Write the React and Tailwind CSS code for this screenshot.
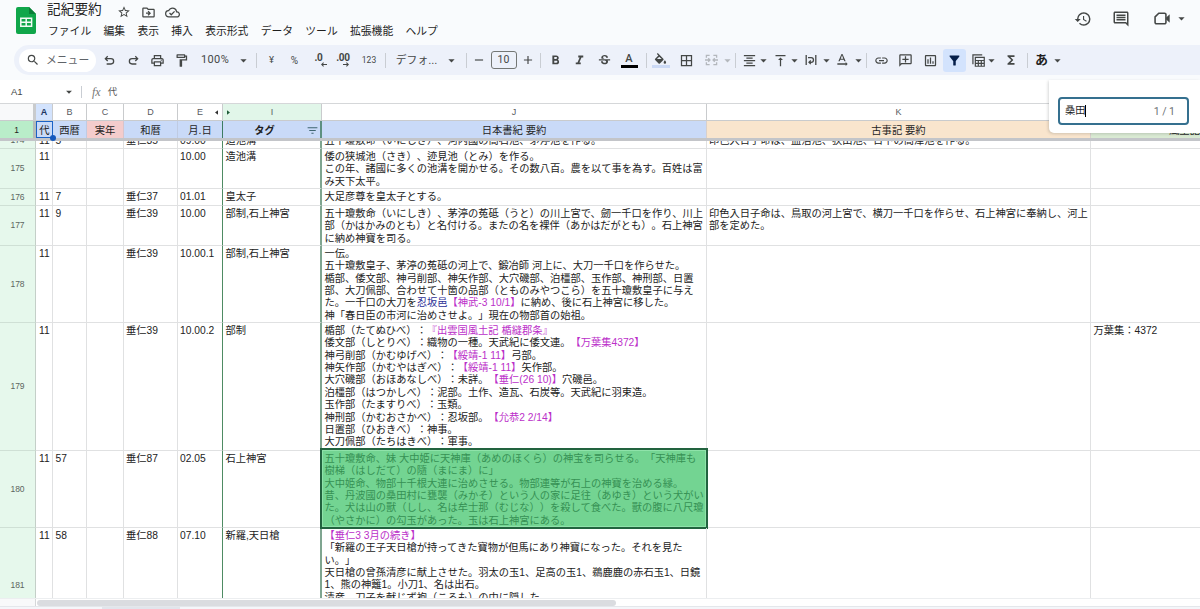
import React from 'react';
import {
    MdStarBorder, MdOutlineDriveFileMove, MdOutlineCloudDone, MdSearch, MdOutlinePrint, MdOutlineFormatPaint,
    MdArrowDropDown, MdFormatBold, MdFormatItalic, MdStrikethroughS, MdBorderAll, MdFormatAlignCenter,
    MdVerticalAlignTop, MdTextRotationNone, MdLink, MdOutlineAddComment, MdOutlineInsertChart, MdFilterAlt,
    MdFunctions, MdHistory, MdOutlineComment, MdFilterList, MdAdd, MdRemove,
} from 'react-icons/md';

const menus = ['ファイル', '編集', '表示', '挿入', '表示形式', 'データ', 'ツール', '拡張機能', 'ヘルプ'];

// a line is a string, or a list of strings where ['m', text] is magenta and ['b', text] is blue
const rows = [
    {
        no: '175', h: 'h-[40px]', a: '11', b: '', d: '', e: '10.00', tag: '造池溝',
        j: [
            '倭の狭城池（さき）、迹見池（とみ）を作る。',
            'この年、諸國に多くの池溝を開かせる。その数八百。農を以て事を為す。百姓は富',
            'み天下太平。',
        ],
    },
    { no: '176', h: 'h-[17px]', a: '11', b: '7', d: '垂仁37', e: '01.01', tag: '皇太子', j: ['大足彦尊を皇太子とする。'] },
    {
        no: '177', h: 'h-[40px]', a: '11', b: '9', d: '垂仁39', e: '10.00', tag: '部制,石上神宮',
        j: [
            '五十瓊敷命（いにしき）、茅渟の菟砥（うと）の川上宮で、劒一千口を作り、川上',
            '部（かはかみのとも）と名付ける。またの名を裸伴（あかはだがとも）。石上神宮',
            'に納め神寶を司る。',
        ],
        k: ['印色入日子命は、鳥取の河上宮で、横刀一千口を作らせ、石上神宮に奉納し、河上', '部を定めた。'],
    },
    {
        no: '178', h: 'h-[77px]', a: '11', b: '', d: '垂仁39', e: '10.00.1', tag: '部制,石上神宮',
        j: [
            '一伝。',
            '五十瓊敷皇子、茅渟の菟砥の河上で、鍛冶師 河上に、大刀一千口を作らせた。',
            '楯部、倭文部、神弓削部、神矢作部、大穴磯部、泊橿部、玉作部、神刑部、日置',
            '部、大刀佩部、合わせて十箇の品部（とものみやつこら）を五十瓊敷皇子に与え',
            ['た。一千口の大刀を', ['b', '忍坂邑'], ['m', '【神武-3 10/1】'], 'に納め、後に石上神宮に移した。'],
            '神「春日臣の市河に治めさせよ。」現在の物部首の始祖。',
        ],
    },
    {
        no: '179', h: 'h-[128px]', a: '11', b: '', d: '垂仁39', e: '10.00.2', tag: '部制', l: ['万葉集：4372'],
        j: [
            ['楯部（たてぬひべ）：', ['m', '『出雲国風土記 楯縫郡条』']],
            ['倭文部（しとりべ）：織物の一種。天武紀に倭文連。', ['m', '【万葉集4372】']],
            ['神弓削部（かむゆげべ）：', ['m', '【綏靖-1 11】'], '弓部。'],
            ['神矢作部（かむやはぎべ）：', ['m', '【綏靖-1 11】'], '矢作部。'],
            ['大穴磯部（おほあなしべ）：未詳。', ['m', '【垂仁(26 10)】'], '穴磯邑。'],
            '泊橿部（はつかしべ）：泥部。土作、造瓦、石炭等。天武紀に羽束造。',
            '玉作部（たますりべ）：玉類。',
            ['神刑部（かむおさかべ）：忍坂部。', ['m', '【允恭2 2/14】']],
            '日置部（ひおきべ）：神事。',
            '大刀佩部（たちはきべ）：軍事。',
        ],
    },
    {
        no: '180', h: 'h-[77px]', a: '11', b: '57', d: '垂仁87', e: '02.05', tag: '石上神宮', match: true,
        j: [
            '五十瓊敷命、妹 大中姫に天神庫（あめのほくら）の神宝を司らせる。「天神庫も',
            '樹梯（はしだて）の隨（まにま）に」',
            '大中姫命、物部十千根大連に治めさせる。物部連等が石上の神寶を治める縁。',
            '昔、丹波國の桑田村に甕襲（みかそ）という人の家に足往（あゆき）という犬がい',
            'た。犬は山の獸（しし、名は牟士那（むじな））を殺して食べた。獸の腹に八尺瓊',
            '（やさかに）の勾玉があった。玉は石上神宮にある。',
        ],
    },
    {
        no: '181', h: 'h-[115px]', a: '11', b: '58', d: '垂仁88', e: '07.10', tag: '新羅,天日槍',
        j: [
            [['m', '【垂仁3 3月の続き】']],
            '「新羅の王子天日槍が持ってきた寶物が但馬にあり神寶になった。それを見た',
            'い。」',
            '天日槍の曾孫清彦に献上させた。羽太の玉1、足高の玉1、鵜鹿鹿の赤石玉1、日鏡',
            '1、熊の神籬1。小刀1、名は出石。',
            '清彦、刀子を献じず袍（ころも）の中に隠した。',
        ],
    },
];

const partialRow = {
    no: '174', h: 'h-[16px]', a: '11', b: '5', d: '垂仁35', e: '09.00', tag: '造池溝',
    j: ['五十瓊敷命（いにしき）、河内國の高石池、茅渟池を作る。'],
    k: ['印色入日子命は、血沼池、狭山池、日下の高津池を作る。'],
};

const Lines = ({ lines = [] }) => lines.map((line, i) => (
    <div key={i}>
        {Array.isArray(line)
            ? line.map((part, n) => Array.isArray(part)
                ? <span key={n} className={part[0] === 'm' ? 'text-[#bb2fc9]' : 'text-[#2c2f96]'}>{part[1]}</span>
                : <span key={n}>{part}</span>)
            : line}
    </div>
));

const Row = ({ row }) => (
    <div className={`flex shrink-0 ${row.h}`}>
        <div className="w-[36px] shrink-0 bg-[#e6f8ec] border-r border-b border-r-[#c4cfc8] border-b-[#cfe0d5] flex items-center justify-center text-[8.5px] text-[#5c6660]">{row.no}</div>
        <div className="w-[17px] shrink-0 border-r border-b border-[#e0e1e2] pt-[2.1px] pl-[3px]">{row.a}</div>
        <div className="w-[34px] shrink-0 border-r border-b border-[#e0e1e2] pt-[2.1px] pl-[2.5px]">{row.b}</div>
        <div className="w-[37px] shrink-0 border-r border-b border-[#e0e1e2]" />
        <div className="w-[54px] shrink-0 border-r border-b border-[#e0e1e2] pt-[2.1px] pl-[2px]">{row.d}</div>
        <div className="w-[45px] shrink-0 border-r border-b border-r-[#4e8b63] border-b-[#e0e1e2] pt-[2.1px] pl-[2px]">{row.e}</div>
        <div className="w-[99px] shrink-0 border-r-2 border-b border-r-[#7fa590] border-b-[#e0e1e2] pt-[2.1px] pl-[2.5px]">{row.tag}</div>
        <div className="relative w-[385px] shrink-0 border-r border-b border-[#e0e1e2] pt-[2.1px] pl-[2.5px]">
            {row.match && <div className="absolute -left-[2px] -right-[2px] -top-[3px] -bottom-[2px] bg-[#73d492] border-2 border-[#22633f] shadow-[inset_0_0_0_1px_#8fe3aa]" />}
            <div className={row.match ? 'relative text-[#369154]' : ''}><Lines lines={row.j} /></div>
        </div>
        <div className="w-[384px] shrink-0 border-r border-b border-[#e0e1e2] pt-[2.1px] pl-[2px]"><Lines lines={row.k} /></div>
        <div className="flex-1 border-b border-[#e0e1e2] pt-[2.1px] pl-[2.5px]"><Lines lines={row.l} /></div>
    </div>
);

const Slot = ({ className, children }) => (
    <div className={`flex items-center justify-center shrink-0 h-full whitespace-nowrap *:shrink-0 ${className}`}>{children}</div>
);

const Caret = ({ className }) => <Slot className={className}><MdArrowDropDown className="w-[15px] h-[15px]" /></Slot>;
const Sep = ({ className }) => <Slot className={className}><div className="w-px h-[15px] bg-[#c9cdd3]" /></Slot>;

const UndoIcon = ({ className }) => (
    <svg viewBox="0 0 16 16" className={className} fill="none" stroke="currentColor" strokeWidth="1.6">
        <path d="M5.8 2.8 2.9 5.7l2.9 2.9M3.2 5.7h6.6a3.3 3.3 0 0 1 0 6.6H4.5" />
    </svg>
);

const DecimalIcon = ({ text, right }) => (
    <div className="relative h-[14px] leading-[10px] text-[10px] font-bold tracking-tight">
        {text}
        <svg viewBox="0 0 8 6" className={`absolute bottom-0 w-[6px] h-[5px] ${right ? 'right-[1px]' : '-right-[4px]'}`} fill="none" stroke="currentColor" strokeWidth="1.4">
            {right ? <path d="M0 3h7M4.5.5 7 3 4.500 5.500" /> : <path d="M8 3H1M3.500.5 1 3l2.500 2.500" />}
        </svg>
    </div>
);

const Toolbar = () => (
    <div className="ml-[14px] h-[30px] bg-[#edf1fa] rounded-l-full flex items-center pl-[5px] text-[#444746] text-[11px]">
        <div className="w-[77px] h-[23px] bg-white rounded-full flex items-center pl-[7px] gap-[3px] shrink-0 mr-[1.5px]">
            <MdSearch className="w-[14px] h-[14px] shrink-0" />
            <span className="ml-[3px] text-[10.8px] text-[#5f6368] whitespace-nowrap">メニュー</span>
        </div>
        <Slot className="w-[24px]"><UndoIcon className="w-[13px] h-[13px]" /></Slot>
        <Slot className="w-[24px]"><UndoIcon className="w-[13px] h-[13px] -scale-x-100" /></Slot>
        <Slot className="w-[24px]"><MdOutlinePrint className="w-[15px] h-[15px]" /></Slot>
        <Slot className="w-[24px]"><MdOutlineFormatPaint className="w-[15px] h-[15px]" /></Slot>
        <Slot className="w-[43px] font-[Roboto,sans-serif] text-[11px] tracking-[0.4px] pt-[1px]">100%</Slot>
        <Caret className="w-[13px]" />
        <Sep className="w-[13px]" />
        <Slot className="w-[18px] font-[Roboto,sans-serif] text-[9.5px]">¥</Slot>
        <Slot className="w-[28px] font-[Roboto,sans-serif] text-[10px]">%</Slot>
        <Slot className="w-[20px] font-[Roboto,sans-serif]"><DecimalIcon text=".0" /></Slot>
        <Slot className="w-[29px] font-[Roboto,sans-serif]"><DecimalIcon text=".00" right /></Slot>
        <Slot className="w-[23px] font-[Roboto,sans-serif] text-[8.5px]">123</Slot>
        <Sep className="w-[9px]" />
        <Slot className="w-[54px] text-[10.8px]">デフォ...</Slot>
        <Caret className="w-[15px]" />
        <Sep className="w-[15px]" />
        <Slot className="w-[11px]"><MdRemove className="w-[14px] h-[14px]" /></Slot>
        <Slot className="w-[38px]">
            <div className="w-[26px] h-[18px] border border-[#747775] rounded-[3px] flex items-center justify-center font-[Roboto,sans-serif] text-[10.5px]">10</div>
        </Slot>
        <Slot className="w-[10px]"><MdAdd className="w-[14px] h-[14px]" /></Slot>
        <Sep className="w-[16px]" />
        <Slot className="w-[14px]"><MdFormatBold className="w-[15px] h-[15px]" /></Slot>
        <Slot className="w-[34px]"><MdFormatItalic className="w-[15px] h-[15px]" /></Slot>
        <Slot className="w-[16px]"><MdStrikethroughS className="w-[15px] h-[15px]" /></Slot>
        <Slot className="w-[33px]">
            <div className="w-[17px] flex flex-col items-center">
                <span className="font-[Roboto,sans-serif] font-medium text-[11px] leading-[12px]">A</span>
                <span className="w-full h-[3px] bg-black" />
            </div>
        </Slot>
        <Sep className="w-px" />
        <Slot className="w-[28px]">
            <div className="w-[18px] flex flex-col items-center">
                <svg viewBox="0 0 24 19" className="w-[15px] h-[12px]" fill="currentColor">
                    <path d="M16.560 8.940 7.620 0 6.210 1.410l2.380 2.380-5.150 5.150a1.490 1.490 0 0 0 0 2.120l5.500 5.500a1.500 1.500 0 0 0 2.120 0l5.500-5.500a1.490 1.490 0 0 0 0-2.120zM19 11.500s-2 2.170-2 3.500a2 2 0 0 0 4 0c0-1.330-2-3.500-2-3.500z" />
                    <path d="M6.200 9.500 10 5.700l3.800 3.800z" fill="#edf1fa" />
                </svg>
                <span className="w-full h-[3px] bg-[#cbd9f5]" />
            </div>
        </Slot>
        <Slot className="w-[23px]"><MdBorderAll className="w-[15px] h-[15px]" /></Slot>
        <Slot className="w-[27px] text-[#b3b7bc]">
            <svg viewBox="0 0 14 12" className="w-[13px] h-[12px]" fill="none" stroke="currentColor" strokeWidth="1.4">
                <path d="M5 1H1.500v2.500M9 1h3.500v2.500M5 11H1.500V8.500M9 11h3.500V8.500M0 6h5M14 6H9M3.500 4.200 5.300 6 3.500 7.800M10.500 4.200 8.700 6l1.800 1.800" />
            </svg>
        </Slot>
        <Slot className="w-[5px] text-[#b3b7bc]"><MdArrowDropDown className="w-[15px] h-[15px]" /></Slot>
        <Sep className="w-[11px]" />
        <Slot className="w-[17px]"><MdFormatAlignCenter className="w-[15px] h-[15px]" /></Slot>
        <Caret className="w-[11px]" />
        <Slot className="w-[23px]"><MdVerticalAlignTop className="w-[15px] h-[15px]" /></Slot>
        <Caret className="w-[5px]" />
        <Slot className="w-[29px]">
            <svg viewBox="0 0 12 12" className="w-[12px] h-[12px]" fill="none" stroke="currentColor" strokeWidth="1.3">
                <path d="M1.200 1v10M10.800 1v10M3 3.700h3.200a2 2 0 0 1 0 4.600H4.200M5.800 6.500 4 8.300l1.800 1.800" />
            </svg>
        </Slot>
        <Caret className="w-px" />
        <Slot className="w-[31px]"><MdTextRotationNone className="w-[16px] h-[16px]" /></Slot>
        <Caret className="w-px" />
        <Sep className="w-[15px]" />
        <Slot className="w-[15px]"><MdLink className="w-[15px] h-[15px]" /></Slot>
        <Slot className="w-[34px]"><MdOutlineAddComment className="w-[15px] h-[15px] -scale-x-100" /></Slot>
        <Slot className="w-[15px]"><MdOutlineInsertChart className="w-[15px] h-[15px]" /></Slot>
        <Slot className="w-[34px]">
            <div className="w-[23px] h-[23px] rounded-[3px] bg-[#d3e3fd] text-[#041e49] flex items-center justify-center">
                <MdFilterAlt className="w-[15px] h-[15px]" />
            </div>
        </Slot>
        <Slot className="w-[13px]">
            <svg viewBox="0 0 14 14" className="w-[13px] h-[13px]" fill="none" stroke="currentColor" strokeWidth="1.3">
                <path d="M1 11V1h10M3.600 3.600h9.600v9.600H3.600zM3.600 7h9.600M3.600 10.100h9.600M6.800 7v6.200M10 7v6.200" />
            </svg>
        </Slot>
        <Caret className="w-[13px]" />
        <Slot className="w-[27px]"><MdFunctions className="w-[14px] h-[14px]" /></Slot>
        <Sep className="w-[5px]" />
        <Slot className="w-[24px] text-[13px] font-bold text-[#1f1f1f]">あ</Slot>
        <Caret className="w-[8px]" />
    </div>
);

const ColumnLetters = () => (
    <div className="flex h-[17px] text-[9px] text-[#575b5f] *:shrink-0 *:flex *:items-center *:justify-center *:pt-[2px] *:border-b *:border-[#c9cbcd]">
        <div className="w-[36px] bg-[#f8f9fa] border-r-[3px]" />
        <div className="w-[17px] bg-[#d3e3fd] border-r font-bold text-[#1c3560]">A</div>
        <div className="w-[34px] border-r">B</div>
        <div className="w-[37px] border-r">C</div>
        <div className="w-[54px] border-r">D</div>
        <div className="w-[45px] border-r relative">
            E
            <svg viewBox="0 0 4 6" className="absolute right-[4px] top-[6px] w-[3px] h-[5px]" fill="#333"><path d="M4 0v6L0 3z" /></svg>
        </div>
        <div className="w-[99px] border-r bg-[#e1f6e9] relative">
            I
            <svg viewBox="0 0 4 6" className="absolute left-[4px] top-[6px] w-[3px] h-[5px]" fill="#1e5b37"><path d="M0 0v6l4-3z" /></svg>
        </div>
        <div className="w-[385px] border-r">J</div>
        <div className="w-[384px] border-r">K</div>
        <div className="w-[109px]" />
    </div>
);

const FrozenRow = () => (
    <div className="flex h-[17px] text-[10.3px] text-[#1f1f1f] *:shrink-0 *:flex *:items-center *:justify-center *:pt-[1.5px]">
        <div className="w-[36px] bg-[#b9edc9] border-r-[3px] border-[#b5bcb8] text-[8.5px]">1</div>
        <div className="w-[17px] bg-[#c9daf8] relative outline outline-[1.5px] -outline-offset-1 outline-[#1a62c5] z-10">
            代
            <span className="absolute -right-[3px] -bottom-[3px] w-[6px] h-[6px] rounded-full bg-[#1558bd]" />
        </div>
        <div className="w-[34px] bg-[#c9daf8] border-r border-[#bfcbe2]">西暦</div>
        <div className="w-[37px] bg-[#f4cccc] border-r border-[#d8c4cb]">実年</div>
        <div className="w-[54px] bg-[#c9daf8] border-r border-[#bfcbe2]">和暦</div>
        <div className="w-[45px] bg-[#c9daf8] border-r border-[#3c7c62]">月.日</div>
        <div className="w-[99px] bg-[#c9daf8] border-r-2 border-[#5d9080] font-bold relative">
            <span className="mr-[14px]">タグ</span>
            <MdFilterList className="absolute right-[1px] top-[3px] w-[13px] h-[13px] text-[#3f6570]" />
        </div>
        <div className="w-[385px] bg-[#c9daf8] border-r border-[#d8d0cc]">日本書紀 要約</div>
        <div className="w-[384px] bg-[#f9e5cd] border-r border-[#d8d0cc]">古事記 要約</div>
        <div className="w-[109px] bg-[#d9ead3]"><span className="ml-[78px] whitespace-nowrap">風土記</span></div>
    </div>
);

const FindBox = () => (
    <div className="absolute right-0 top-[80px] w-[151px] h-[53px] bg-white rounded-bl-[5px] shadow-[-1px_1px_3px_rgba(60,64,67,0.2)] z-20 pl-[9px] pt-[17px]">
        <div className="w-[131px] h-[28px] border-2 border-[#35708f] rounded-[4px] flex items-center pl-[5px] pr-[12px] text-[10.3px]">
            <span className="text-[#1f1f1f]">桑田</span>
            <span className="w-px h-[12px] -ml-[1px] bg-black" />
            <span className="ml-auto text-[#6b6f73] font-[Roboto,sans-serif] text-[10.5px] pt-[1px]">1 / 1</span>
        </div>
    </div>
);

const App = () => {
    return (
        <div className="relative w-[1200px] h-[609px] overflow-hidden bg-[#f9fbfd] flex flex-col font-['Liberation_Sans','Noto_Sans_CJK_JP',sans-serif] [text-spacing-trim:space-all]">
            {/* Title + menus */}
            <div className="h-[45px] shrink-0 flex text-[#1f1f1f]">
                <svg viewBox="0 0 20 27" className="w-[20px] h-[27px] ml-[16px] mt-[7px] shrink-0">
                    <path d="M2 0h11l7 7v18a2 2 0 0 1-2 2H2a2 2 0 0 1-2-2V2a2 2 0 0 1 2-2z" fill="#10a64a" />
                    <path d="M13 0l7 7h-7z" fill="#0b7f38" />
                    <path d="M4.800 11.300h10.800v8H4.800zM4.800 15.300h10.800M10.200 11.300v8" fill="none" stroke="#f3fbf5" strokeWidth="1.500" />
                </svg>
                <div className="ml-[12px] flex flex-col">
                    <div className="flex items-center h-[21px] whitespace-nowrap text-[#444746]">
                        <span className="text-[13.7px] text-[#1f1f1f] -ml-[1px]">記紀要約</span>
                        <MdStarBorder className="ml-[15px] mt-[3px] w-[14px] h-[14px]" />
                        <MdOutlineDriveFileMove className="ml-[10px] mt-[3px] w-[15px] h-[15px]" />
                        <MdOutlineCloudDone className="ml-[9px] mt-[3px] w-[15px] h-[15px]" />
                    </div>
                    <div className="flex items-center h-[20px] gap-[12.300px] text-[10.800px] whitespace-nowrap">
                        {menus.map((menu) => <span key={menu}>{menu}</span>)}
                    </div>
                </div>
                <div className="ml-auto flex items-center h-[37px] pr-[11px] text-[#444746]">
                    <MdHistory className="w-[18px] h-[18px]" />
                    <MdOutlineComment className="ml-[20px] w-[18px] h-[18px]" />
                    <svg viewBox="0 0 18 14" className="ml-[24px] w-[17px] h-[13px]" fill="none" stroke="currentColor" strokeWidth="1.700">
                        <path d="M5 1.300h6.200a1.500 1.500 0 0 1 1.500 1.500v8.400a1.500 1.500 0 0 1-1.500 1.500H2.500A1.500 1.500 0 0 1 1 11.200V5.300z" />
                        <path d="M13 6.200 16.500 3v8L13 7.800z" fill="currentColor" strokeWidth="0.500" />
                    </svg>
                    <MdArrowDropDown className="ml-[3px] w-[15px] h-[15px]" />
                </div>
            </div>

            <Toolbar />

            {/* Formula bar */}
            <div className="mt-[5px] h-[24px] shrink-0 bg-white border-b border-[#d5d7d9] flex items-center pt-[1px] text-[#444746]">
                <span className="w-[62px] pl-[11px] pt-[1px] text-[9.500px]">A1</span>
                <MdArrowDropDown className="w-[14px] h-[14px]" />
                <div className="ml-[5px] w-px h-[12px] bg-[#c9cdd3]" />
                <span className="ml-[10px] font-['Liberation_Serif',serif] italic text-[12px] text-[#777]">fx</span>
                <span className="ml-[7px] pt-[1px] text-[9.500px] text-[#555]">代</span>
            </div>

            {/* Sheet */}
            <div className="h-[494px] shrink-0 bg-white flex flex-col overflow-hidden">
                <ColumnLetters />
                <FrozenRow />
                <div className="h-[3px] shrink-0 bg-[#c3c5c9]" />
                <div className="flex-1 min-h-0 overflow-hidden flex flex-col text-[10.250px] leading-[12.350px] text-[#222] whitespace-pre">
                    <div className="h-[8px] shrink-0 overflow-hidden flex flex-col justify-end"><Row row={partialRow} /></div>
                    {rows.map((row) => <Row key={row.no} row={row} />)}
                </div>
            </div>

            {/* Horizontal scrollbar */}
            <div className="h-[8px] shrink-0 bg-white border-t border-[#eceef0] flex items-center">
                <div className="w-[36px] h-full border-r border-[#d5d7d9] bg-[#f8f9fa]" />
                <div className="ml-[1px] w-[579px] h-[6px] rounded-full bg-[#dadce0]" />
            </div>
            <div className="flex-1 bg-[#f4f6fa] border-t border-[#e4e7eb]">
                <div className="ml-[102px] w-[78px] h-full bg-[#e1e5ec]" />
            </div>

            <FindBox />
        </div>
    );
};

export default App;
